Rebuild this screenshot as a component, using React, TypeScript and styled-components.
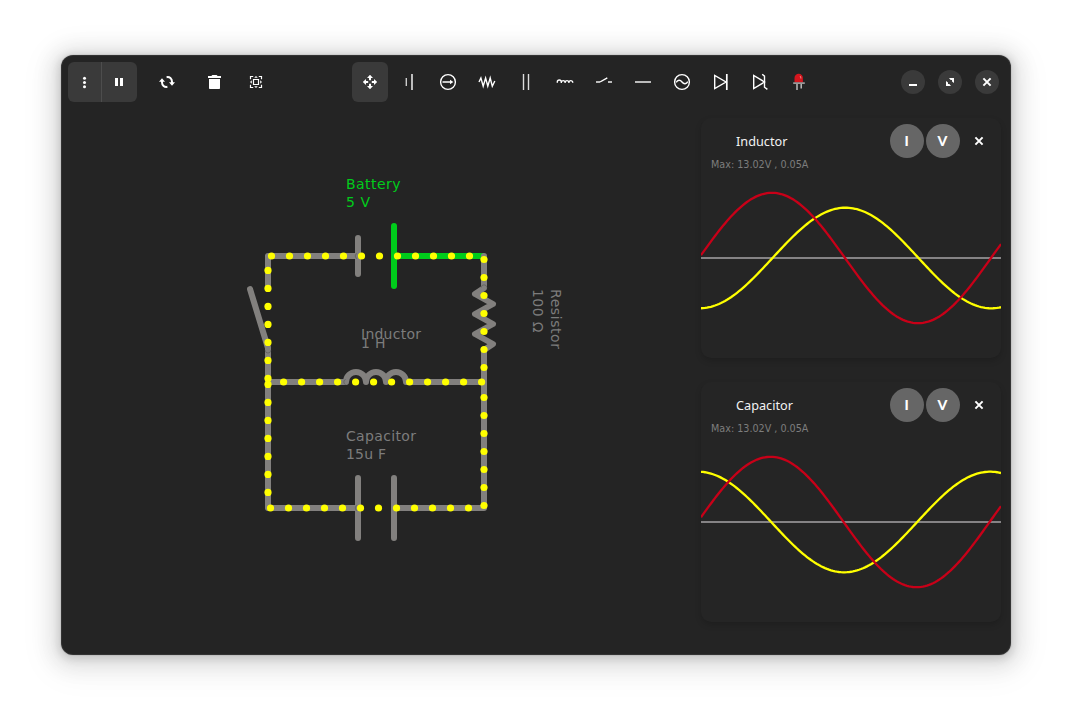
import React from "react";
import styled, { createGlobalStyle } from "styled-components";

const GlobalStyle = createGlobalStyle`
  *, *::before, *::after { box-sizing: border-box; }
  body { margin: 0; background: #fff; font-family: "Noto Sans", "Open Sans", sans-serif; }
  button { font: inherit; color: inherit; border: 0; margin: 0; padding: 0; background: none; }
  svg { display: block; flex: none; }
`;

const Desktop = styled.div`
  width: 1072px;
  height: 722px;
  padding: 55px 61px 67px;
  overflow: hidden;
`;

const AppWindow = styled.main`
  display: flex;
  flex-direction: column;
  width: 950px;
  height: 600px;
  border-radius: 12px;
  overflow: hidden;
  background: #242424;
  color: #fff;
  box-shadow: inset 0 0 0 1px rgba(255, 255, 255, 0.07),
    0 0 0 1px rgba(0, 0, 0, 0.05), 0 2px 8px 2px rgba(0, 0, 0, 0.13),
    0 3px 20px 10px rgba(0, 0, 0, 0.09), 0 6px 32px 16px rgba(0, 0, 0, 0.04);
`;

const HeaderBar = styled.header`
  display: flex;
  height: 54px;
  padding: 7px 12px 7px 7px;
`;

const StartTools = styled.div`
  display: flex;
  width: 284px;
`;

const LinkedButtons = styled.div`
  display: flex;
  width: 69px;
  height: 40px;
  margin-right: 12px;
  border-radius: 6px;
  background: #3a3a3a;
`;

const ToolButton = styled.button<{ $width?: number; $active?: boolean; $divided?: boolean }>`
  display: flex;
  align-items: center;
  justify-content: center;
  width: ${(p) => p.$width ?? 36}px;
  height: 40px;
  border-radius: ${(p) => (p.$divided ? 0 : 6)}px;
  background: ${(p) => (p.$active ? "#3a3a3a" : "transparent")};
  ${(p) => p.$divided && "border-right: 1px solid #4d4d4d;"}
`;

const Palette = styled.div`
  display: flex;
  gap: 3px;
`;

const WindowControls = styled.div`
  display: flex;
  align-items: center;
  gap: 13px;
  margin-left: auto;
`;

const RoundButton = styled.button`
  display: flex;
  align-items: center;
  justify-content: center;
  width: 24px;
  height: 24px;
  border-radius: 50%;
  background: #3a3a3a;
`;

const Workspace = styled.div`
  display: flex;
  flex: 1;
  min-height: 0;
`;

const CircuitArea = styled.section`
  width: 640px;
`;

const Scopes = styled.aside`
  display: flex;
  flex-direction: column;
  gap: 24px;
  padding-top: 9px;
`;

const ScopeCard = styled.article`
  display: flex;
  flex-direction: column;
  width: 300px;
  height: 240px;
  padding-top: 5px;
  border-radius: 10px;
  background: #252525;
  box-shadow: 0 3px 6px rgba(0, 0, 0, 0.16);
`;

const ScopeHeader = styled.div`
  display: flex;
  align-items: center;
  height: 36px;
  padding: 0 14px 0 35px;
`;

const ScopeTitle = styled.h2`
  flex: 1;
  margin: 0;
  padding-top: 1px;
  font-size: 12.7px;
  font-weight: 400;
  line-height: 17px;
  color: #f2f2f2;
`;

const ProbeButton = styled.button`
  width: 34px;
  height: 34px;
  margin-right: 2px;
  padding-right: 1px;
  border-radius: 50%;
  background: #666;
  font-family: Lato, sans-serif;
  font-size: 14px;
  font-weight: 900;
  line-height: 34px;
  text-align: center;
`;

const CloseButton = styled.button`
  display: flex;
  margin-left: 9px;
`;

const ScopeMax = styled.p`
  height: 12px;
  margin: 0 0 0 10px;
  color: #7d7d7d;
  font-family: "DejaVu Sans Condensed", "DejaVu Sans", sans-serif;
  font-stretch: condensed;
  font-size: 10.7px;
  line-height: 12px;
  white-space: pre;
`;

const Line = styled.g`
  fill: none;
  stroke: #fff;
  stroke-width: 1.4;
`;

const PartLabel = styled.text<{ $tone: string }>`
  fill: ${(p) => p.$tone};
  font-family: "DejaVu Sans", sans-serif;
  font-size: 14px;
`;

const WIRE = "#82807e";
const LIVE = "#00cc1b";
const LABEL = "#7c7c7c";

const Icon = ({ children }: { children: React.ReactNode }) => (
  <svg width="16" height="16" viewBox="0 0 16 16">{children}</svg>
);

const PaletteIcon = ({ children }: { children: React.ReactNode }) => (
  <svg width="18" height="18" viewBox="0 0 18 18"><Line>{children}</Line></svg>
);

const CloseIcon = () => (
  <Icon>
    <path d="M4.4 4.4l7.2 7.2M11.6 4.4l-7.2 7.2" stroke="#fff" strokeWidth="2" fill="none" />
  </Icon>
);

const MoveIcon = () => (
  <Icon>
    <path
      fill="#fff"
      d="M8 .8l3 3.2H9v2.2H7V4H5zM8 15.2l3-3.2H9V9.8H7V12H5zM.8 8L4 5v2h2.2v2H4v2zM15.2 8L12 5v2H9.8v2H12v2z"
    />
  </Icon>
);

const components: { name: string; icon: React.ReactNode }[] = [
  {
    name: "Battery",
    icon: <PaletteIcon><path d="M6.3 5v8" stroke="#ccc" /><path d="M12 1v16" /></PaletteIcon>,
  },
  {
    name: "Current source",
    icon: (
      <PaletteIcon>
        <circle cx="9" cy="9" r="7.4" />
        <path d="M3.5 9H12" />
        <path d="M11 6.8L14.4 9 11 11.2z" fill="#fff" stroke="none" />
      </PaletteIcon>
    ),
  },
  {
    name: "Resistor",
    icon: <PaletteIcon><path d="M1 9L2.9 5 5.2 13.2 7.6 5 9.8 13.2 12.2 5 14.3 13.2 16.8 8" /></PaletteIcon>,
  },
  {
    name: "Capacitor",
    icon: <PaletteIcon><path d="M6.5 1v16M11.5 1v16" stroke="#ddd" /></PaletteIcon>,
  },
  {
    name: "Inductor",
    icon: (
      <PaletteIcon>
        <path d="M1.3 9.8V9a2 2 0 0 1 4 0v1V9a2 2 0 0 1 3.8 0v1V9a2 2 0 0 1 3.8 0v1V9a2 2 0 0 1 3.8 0v.8" />
      </PaletteIcon>
    ),
  },
  {
    name: "Switch",
    icon: <PaletteIcon><path d="M1 9h4M13 9h4" stroke="#bbb" strokeWidth="2" /><path d="M5 9l7.3-4.2" /></PaletteIcon>,
  },
  {
    name: "Wire",
    icon: <PaletteIcon><path d="M1 9h16" stroke="#bbb" strokeWidth="2" /></PaletteIcon>,
  },
  {
    name: "AC source",
    icon: (
      <PaletteIcon>
        <circle cx="9" cy="9" r="7.4" />
        <path d="M3.2 9.3C4.7 6.6 7.2 6.6 9 9s4.3 2.4 5.8-.3" />
      </PaletteIcon>
    ),
  },
  {
    name: "Diode",
    icon: <PaletteIcon><path d="M2.7 2.4v13.2L14 9z" /><path d="M14.8 1v16" strokeWidth="1.7" /></PaletteIcon>,
  },
  {
    name: "Zener diode",
    icon: <PaletteIcon><path d="M2.7 2.4v13.2L13.5 9z" /><path d="M11.2 1.3l2.3 1.9v11l2.9 2.2" /></PaletteIcon>,
  },
  {
    name: "LED",
    icon: (
      <PaletteIcon>
        <path d="M4.5 9.5V5a4.2 4.2 0 0 1 8.4 0v4.5z" fill="#d4151d" stroke="none" />
        <path d="M9.9 3q1 .6 1 2.5" stroke="#ef8a8a" strokeWidth="1" />
        <path d="M3.2 10.2h11.6" stroke="#999" strokeWidth="1.8" />
        <path d="M7 11v6M11.2 11v4.6" stroke="#bbb" strokeWidth="1.5" />
      </PaletteIcon>
    ),
  },
];

const range = (from: number, to: number) => {
  const out: number[] = [];
  for (let v = from; v <= to + 0.1; v += 18) out.push(v);
  return out;
};

const charges: [number, number][] = [
  ...range(271.5, 469.5).map((x): [number, number] => [x, 256]),
  ...range(270.4, 378.4).map((y): [number, number] => [268, y]),
  ...range(384.4, 492.4).map((y): [number, number] => [268, y]),
  ...range(283.6, 463.6).map((x): [number, number] => [x, 382]),
  [481.6, 382],
  ...range(270.5, 468.5).map((x): [number, number] => [x, 508]),
  ...range(259.5, 367.5).map((y): [number, number] => [484, y]),
  ...range(397.5, 505.5).map((y): [number, number] => [484, y]),
];

const Circuit = () => (
  <svg width="640" height="546" viewBox="61 109 640 546">
    <g fill="none" stroke={WIRE} strokeWidth="6" strokeLinecap="round" strokeLinejoin="round">
      <path d="M484 382V508H394M358 508H268V348M268 288V256H358" />
      <path d="M268 382H344" />
      <path d="M346 382a10 10 0 0 1 20 0" />
      <path d="M366 382a10 10 0 0 1 20 0a10 10 0 0 1 20 0" strokeLinecap="butt" />
      <path d="M406 382H484" />
      <path d="M358 238V274M358 478V538M394 478V538M250 289L268 348" />
    </g>
    <path d="M394 256H484" stroke={LIVE} strokeWidth="6" />
    <path d="M394 226V286" stroke={LIVE} strokeWidth="6" strokeLinecap="round" />
    <path
      d="M484 256V288L475 294 493 304 475 314 493 324 475 334 493 344 484 350V382"
      fill="none" stroke={WIRE} strokeWidth="6" strokeLinecap="round" strokeLinejoin="round"
    />
    <g fill="none" stroke="#5c5b5a" strokeWidth="0.7">
      <path d="M265.2 350.2a2.8 2.8 0 0 0 5.6 0" />
      <path d="M481.2 287.6a2.8 2.8 0 0 1 5.6 0" />
      <path d="M357 253.4a2.8 2.8 0 0 0 0 5.2M357 505.4a2.8 2.8 0 0 0 0 5.2M345.6 379.4a2.8 2.8 0 0 0 0 5.2" />
    </g>
    {charges.map(([x, y], i) => (
      <circle key={i} cx={x} cy={y} r="3.6" fill="#ff0" />
    ))}
    <PartLabel $tone={LIVE} x="346" y="189" textLength="54.5">Battery</PartLabel>
    <PartLabel $tone={LIVE} x="346" y="207" textLength="24">5 V</PartLabel>
    <PartLabel $tone={LABEL} x="361" y="339" textLength="60">Inductor</PartLabel>
    <PartLabel $tone={LABEL} x="361" y="348" textLength="24.5">1 H</PartLabel>
    <PartLabel $tone={LABEL} x="346" y="441" textLength="70">Capacitor</PartLabel>
    <PartLabel $tone={LABEL} x="346" y="459" textLength="40">15u F</PartLabel>
    <g transform="translate(551 289) rotate(90)">
      <PartLabel $tone={LABEL} textLength="60">Resistor</PartLabel>
      <PartLabel $tone={LABEL} y="18" textLength="43.5">100 Ω</PartLabel>
    </g>
  </svg>
);

const wave = (amplitude: number, start: number) =>
  Array.from({ length: 151 }, (_, i) => {
    const x = i * 2;
    const y = 87 - amplitude * Math.sin(((x - start) * 2 * Math.PI) / 292);
    return `${i ? "L" : "M"}${x} ${y.toFixed(2)}`;
  }).join("");

type ScopeProps = { title: string; voltageStart: number; currentStart: number };

const Scope = ({ title, voltageStart, currentStart }: ScopeProps) => (
  <ScopeCard>
    <ScopeHeader>
      <ScopeTitle>{title}</ScopeTitle>
      <ProbeButton>I</ProbeButton>
      <ProbeButton>V</ProbeButton>
      <CloseButton aria-label="Close"><CloseIcon /></CloseButton>
    </ScopeHeader>
    <ScopeMax>Max: 13.02V , 0.05A</ScopeMax>
    <svg width="300" height="187" viewBox="0 0 300 187" fill="none">
      <path d="M0 87H300" stroke="#858385" strokeWidth="2" />
      <path d={wave(50.3, currentStart)} stroke="#ff0" strokeWidth="2.3" />
      <path d={wave(65.2, voltageStart)} stroke="#c80018" strokeWidth="2.3" />
    </svg>
  </ScopeCard>
);

export default function App() {
  return (
    <>
      <GlobalStyle />
      <Desktop>
        <AppWindow>
          <HeaderBar>
            <StartTools>
              <LinkedButtons>
                <ToolButton $width={34} $divided aria-label="Menu">
                  <Icon>
                    <circle cx="7.5" cy="4.3" r="1.5" fill="#fff" />
                    <circle cx="7.5" cy="8.5" r="1.5" fill="#fff" />
                    <circle cx="7.5" cy="12.7" r="1.5" fill="#fff" />
                  </Icon>
                </ToolButton>
                <ToolButton $width={34} aria-label="Pause">
                  <Icon><path d="M4 4h3v8H4zM9 4h3v8H9z" fill="#fff" /></Icon>
                </ToolButton>
              </LinkedButtons>
              <ToolButton aria-label="Restart">
                <Icon>
                  <path d="M7.6 3.2C10.6 2.6 13 4.6 13 7.8V9M8.4 12.8C5.4 13.4 3 11.4 3 8.2V7" stroke="#fff" strokeWidth="2" fill="none" />
                  <path d="M10 8.3h6l-3 3.4zM0 7.7h6L3 4.3z" fill="#fff" />
                </Icon>
              </ToolButton>
              <ToolButton $width={58} aria-label="Delete">
                <Icon><path d="M2 2h3.5q.3-1 1.2-1h3.6q.9 0 1.2 1H15v2H2zM3 5h11v9.2q0 .8-.8.8H3.8q-.8 0-.8-.8z" fill="#fff" /></Icon>
              </ToolButton>
              <ToolButton $width={26} aria-label="Fit to view">
                <Icon>
                  <g fill="none" stroke="#fff" strokeWidth="1.2">
                    <path d="M2.5 5.2V2.5h2.7M10.8 2.5h2.7v2.7M13.5 10.8v2.7h-2.7M5.2 13.5H2.5v-2.7" />
                    <path d="M5.5 5.5h5v5h-5z" />
                  </g>
                  <path d="M6.2 3.8L8 2l1.8 1.8zM6.2 12.2L8 14l1.8-1.8zM3.8 6.2L2 8l1.8 1.8zM12.2 6.2L14 8l-1.8 1.8z" fill="#fff" />
                </Icon>
              </ToolButton>
            </StartTools>
            <Palette>
              <ToolButton $active aria-label="Move"><MoveIcon /></ToolButton>
              {components.map((c) => (
                <ToolButton key={c.name} aria-label={c.name}>{c.icon}</ToolButton>
              ))}
            </Palette>
            <WindowControls>
              <RoundButton aria-label="Minimize">
                <Icon><path d="M4 10h8v2H4z" fill="#fff" /></Icon>
              </RoundButton>
              <RoundButton aria-label="Maximize">
                <Icon><path d="M7 4h5v5l-2-1.6V6H8.6zM4 7l2 1.6V10h1.4L9 12H4z" fill="#fff" /></Icon>
              </RoundButton>
              <RoundButton aria-label="Close window"><CloseIcon /></RoundButton>
            </WindowControls>
          </HeaderBar>
          <Workspace>
            <CircuitArea><Circuit /></CircuitArea>
            <Scopes>
              <Scope title="Inductor" voltageStart={-2} currentStart={71.5} />
              <Scope title="Capacitor" voltageStart={-3.4} currentStart={-75.8} />
            </Scopes>
          </Workspace>
        </AppWindow>
      </Desktop>
    </>
  );
}
